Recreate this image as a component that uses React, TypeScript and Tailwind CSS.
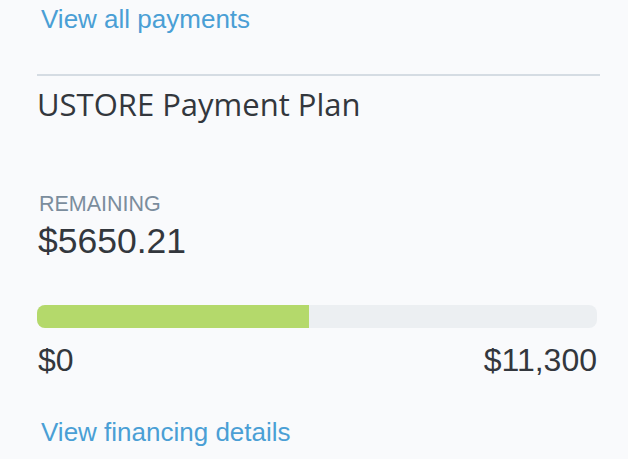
const arial = { fontFamily: '"Liberation Sans", Arial, sans-serif' };

export default function App() {
  // filled share of the plan bar, as in the screenshot
  const pct = 48.6;

  return (
    <div className="min-h-[459px] w-[628px] bg-[#f9fafc] pl-[37px] pr-[28px] text-[#33373d]" style={arial}>
      <a href="#" className="block pt-[4px] pl-[4px] text-[26px] leading-[30px] text-[#4a9fd5]">
        View all payments
      </a>

      <div className="mt-[40px] h-[2px] bg-[#d5dce3]" />

      <h2
        className="mt-[10px] text-[31px] leading-[36px] font-medium text-[#33373d]"
        style={{ fontFamily: '"Open Sans", sans-serif' }}
      >
        USTORE Payment Plan
      </h2>

      <div className="mt-[70px] pl-[2px] text-[21.5px] leading-[24px] text-[#7b8d9d]">REMAINING</div>
      <div className="mt-[5px] pl-[1px] text-[35.5px] leading-[40px]">$5650.21</div>

      <div className="mt-[44px] mr-[3px] h-[23px] overflow-hidden rounded-[8px] bg-[#eceff2]">
        <div className="h-full bg-[#b4d96b]" style={{ width: `${pct}%` }} />
      </div>

      <div className="mt-[14px] mr-[3px] flex justify-between text-[32px] leading-[36px]">
        <span className="pl-[1px]">$0</span>
        <span>$11,300</span>
      </div>

      <a href="#" className="mt-[39px] block pl-[4px] text-[26px] leading-[30px] text-[#4a9fd5]">
        View financing details
      </a>
    </div>
  );
}
